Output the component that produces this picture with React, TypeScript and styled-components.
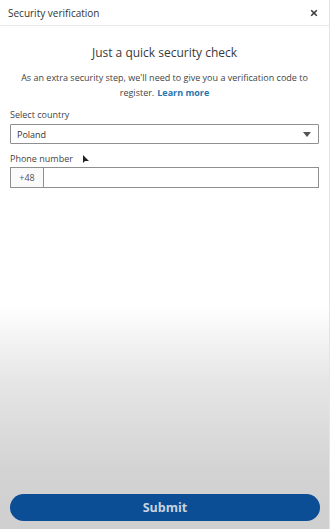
import React from "react";
import styled, { createGlobalStyle } from "styled-components";

const Global = createGlobalStyle`
  html, body { margin: 0; padding: 0; }
  body { font-family: "Open Sans", "Noto Sans", sans-serif; }
  * { box-sizing: border-box; }
`;

const Page = styled.div`
  width: 330px;
  height: 529px;
  display: flex;
  flex-direction: column;
  background: linear-gradient(
    to bottom,
    #ffffff 0px,
    #ffffff 305px,
    #e6e6e6 380px,
    #d3d3d3 470px,
    #cfcfcf 529px
  );
  border-right: 1px solid #e4e4e4;
`;

const Header = styled.div`
  height: 26px;
  display: flex;
  align-items: center;
  justify-content: space-between;
  padding: 0 11px 0 8px;
  border-bottom: 1px solid #e9e9e9;
  background: #fff;
`;

const HeaderTitle = styled.div`
  font-size: 10px;
  color: #333;
`;

const Close = styled.div`
  width: 8px;
  height: 8px;
  display: flex;
  align-items: center;
  justify-content: center;
`;

const Body = styled.div`
  flex: 1;
  display: flex;
  flex-direction: column;
  padding: 0 10px;
`;

const Title = styled.h1`
  margin: 19px 0 0;
  font-size: 12px;
  font-weight: 400;
  color: #3a3a3a;
  text-align: center;
  line-height: 16px;
`;

const Paragraph = styled.p`
  margin: 9px 0 0;
  font-size: 9px;
  line-height: 15px;
  color: #444;
  text-align: center;
  padding: 0 10px;
`;

const Link = styled.span`
  display: inline-block;
  margin-left: 3px;
  color: #2a75ad;
  font-weight: 700;
`;

const Label = styled.div<{ $top: number }>`
  margin-top: ${(p) => p.$top}px;
  font-size: 9px;
  line-height: 12px;
  color: #444;
  display: flex;
  align-items: center;
  gap: 9px;
`;

const SelectBox = styled.div`
  margin-top: 3px;
  height: 20px;
  border: 1px solid #8f8f8f;
  border-radius: 1px;
  display: flex;
  align-items: center;
  justify-content: space-between;
  padding: 0 7px 0 6px;
  font-size: 9px;
  color: #333;
  background: #fff;
`;

const PhoneRow = styled.div`
  margin-top: 2px;
  height: 21px;
  border: 1px solid #8f8f8f;
  display: flex;
  background: #fff;
`;

const Prefix = styled.div`
  width: 33px;
  border-right: 1px solid #8f8f8f;
  background: #fafafa;
  display: flex;
  align-items: center;
  justify-content: center;
  font-size: 9px;
  color: #555;
`;

const Spacer = styled.div`
  flex: 1;
`;

const Footer = styled.div`
  padding: 0 10px 8px;
`;

const Submit = styled.button`
  width: 310px;
  height: 27px;
  border: none;
  border-radius: 14px;
  background: #0b4e96;
  color: #c9d3df;
  font-family: "Open Sans", "Noto Sans", sans-serif;
  font-weight: 700;
  font-size: 12.5px;
  display: flex;
  align-items: center;
  justify-content: center;
`;

const Cursor = () => (
  <svg width="8" height="10" viewBox="0 0 8 10">
    <path d="M1 1 L1 9 L3 7 L7 7 Z" fill="#222" />
  </svg>
);

export default function App() {
  return (
    <>
      <Global />
      <Page>
        <Header>
          <HeaderTitle>Security verification</HeaderTitle>
          <Close>
            <svg width="8" height="8" viewBox="0 0 8 8">
              <path d="M1.2 1.2 L6.8 6.8 M6.8 1.2 L1.2 6.8" stroke="#3a3a3a" strokeWidth="1.6" />
            </svg>
          </Close>
        </Header>
        <Body>
          <Title>Just a quick security check</Title>
          <Paragraph>
            As an extra security step, we'll need to give you a verification code to
            register.<Link>Learn more</Link>
          </Paragraph>
          <Label $top={9}>Select country</Label>
          <SelectBox>
            <span>Poland</span>
            <svg width="8" height="5" viewBox="0 0 8 5">
              <path d="M0 0 L8 0 L4 5 Z" fill="#555" />
            </svg>
          </SelectBox>
          <Label $top={9}>
            <span>Phone number</span>
            <Cursor />
          </Label>
          <PhoneRow>
            <Prefix>+48</Prefix>
            <Spacer />
          </PhoneRow>
        </Body>
        <Footer>
          <Submit>Submit</Submit>
        </Footer>
      </Page>
    </>
  );
}
